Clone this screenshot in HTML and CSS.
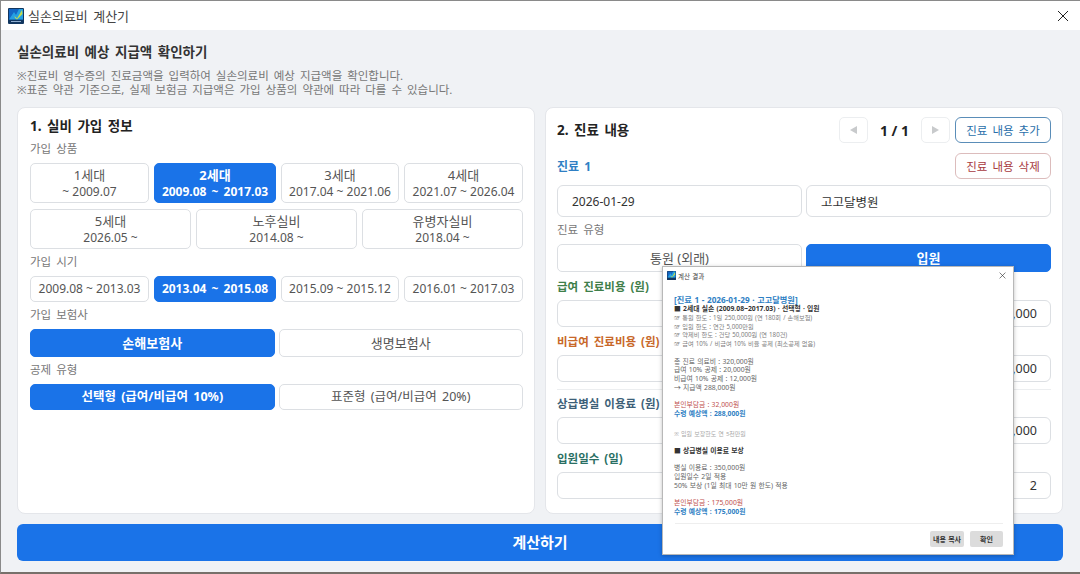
FILE: index.html
```html
<!DOCTYPE html>
<html lang="ko">
<head>
    <meta charset="UTF-8">
    <title>실손의료비 계산기</title>
    <link rel="stylesheet" href="styles.css">
</head>
<body>
    <div class="window">
        <div class="titlebar">
            <svg class="app-icon" viewBox="0 0 16 16">
                <rect width="16" height="16" rx="1" fill="#12365f"/>
                <rect x="1" y="1" width="14" height="10.5" fill="#1467c4"/>
                <path d="M1 11.5 L6 4 L8 7 L11 1 L15 1 L15 11.5 Z" fill="#25a0e2"/>
                <path d="M6.5 8 L9 10.5 L14 2 L14.5 6 L9 11.5 L7 10 Z" fill="#c3dc4e"/>
                <rect x="3" y="13" width="10" height="1" fill="#8fadcf"/>
            </svg>
            <span class="title-text">실손의료비 계산기</span>
            <svg class="close-icon" viewBox="0 0 12 12"><path d="M1 1 L11 11 M11 1 L1 11"/></svg>
        </div>

        <div class="content">
            <h1>실손의료비 예상 지급액 확인하기</h1>
            <p class="note">※진료비 영수증의 진료금액을 입력하여 실손의료비 예상 지급액을 확인합니다.</p>
            <p class="note">※표준 약관 기준으로, 실제 보험금 지급액은 가입 상품의 약관에 따라 다를 수 있습니다.</p>

            <div class="cards">
                <div class="card">
                    <h2 class="card-title">1. 실비 가입 정보</h2>

                    <div class="label">가입 상품</div>
                    <div class="opts four tall">
                        <button><span class="ko">1세대</span><br>~ 2009.07</button>
                        <button class="on"><span class="ko">2세대</span><br>2009.08 ~ 2017.03</button>
                        <button><span class="ko">3세대</span><br>2017.04 ~ 2021.06</button>
                        <button><span class="ko">4세대</span><br>2021.07 ~ 2026.04</button>
                    </div>
                    <div class="opts three tall row-gap">
                        <button><span class="ko">5세대</span><br>2026.05 ~</button>
                        <button><span class="ko">노후실비</span><br>2014.08 ~</button>
                        <button><span class="ko">유병자실비</span><br>2018.04 ~</button>
                    </div>

                    <div class="label">가입 시기</div>
                    <div class="opts four short">
                        <button>2009.08 ~ 2013.03</button>
                        <button class="on">2013.04 ~ 2015.08</button>
                        <button>2015.09 ~ 2015.12</button>
                        <button>2016.01 ~ 2017.03</button>
                    </div>

                    <div class="label">가입 보험사</div>
                    <div class="opts two mid">
                        <button class="on"><span class="ko">손해보험사</span></button>
                        <button><span class="ko">생명보험사</span></button>
                    </div>

                    <div class="label">공제 유형</div>
                    <div class="opts two short">
                        <button class="on"><span class="deduct">선택형 (급여/비급여 10%)</span></button>
                        <button><span class="deduct">표준형 (급여/비급여 20%)</span></button>
                    </div>
                </div>

                <div class="card card-right">
                    <div class="card-head">
                        <h2 class="card-title">2. 진료 내용</h2>
                        <div class="pager">
                            <button class="page-btn"><span class="arrow-left"></span></button>
                            <span class="page-num">1 / 1</span>
                            <button class="page-btn"><span class="arrow-right"></span></button>
                        </div>
                        <button class="add-btn">진료 내용 추가</button>
                    </div>

                    <div class="visit-head">
                        <span class="visit-name">진료 1</span>
                        <button class="del-btn">진료 내용 삭제</button>
                    </div>

                    <div class="two-inputs">
                        <input class="text-input date" value="2026-01-29">
                        <input class="text-input" value="고고달병원">
                    </div>

                    <div class="label">진료 유형</div>
                    <div class="opts two mid">
                        <button><span class="ko">통원 (외래)</span></button>
                        <button class="on"><span class="ko">입원</span></button>
                    </div>

                    <div class="amount-label green">급여 진료비용 (원)</div>
                    <input class="amount" value="200,000">
                    <div class="amount-label orange">비급여 진료비용 (원)</div>
                    <input class="amount" value="120,000">
                    <div class="divider"></div>
                    <div class="amount-label slate after-line">상급병실 이용료 (원)</div>
                    <input class="amount" value="350,000">
                    <div class="amount-label teal">입원일수 (일)</div>
                    <input class="amount" value="2">
                </div>
            </div>

            <button class="calc-btn">계산하기</button>
        </div>

        <!-- result dialog sits over the main window -->
        <div class="dialog">
            <div class="dialog-bar">
                <svg class="dialog-icon" viewBox="0 0 16 16">
                    <rect width="16" height="16" rx="1" fill="#12365f"/>
                    <rect x="1" y="1" width="14" height="10.5" fill="#1467c4"/>
                    <path d="M1 11.5 L6 4 L8 7 L11 1 L15 1 L15 11.5 Z" fill="#25a0e2"/>
                    <path d="M6.5 8 L9 10.5 L14 2 L14.5 6 L9 11.5 L7 10 Z" fill="#c3dc4e"/>
                </svg>
                <span class="dialog-title">계산 결과</span>
                <svg class="dialog-close" viewBox="0 0 12 12"><path d="M1 1 L11 11 M11 1 L1 11"/></svg>
            </div>
            <div class="dialog-body">
                <div class="line head blue">[진료 1 - 2026-01-29 · 고고달병원]</div>
                <div class="line strong dark">■ 2세대 실손 (2009.08~2017.03) · 선택형 · 입원</div>
                <div class="line small">☞ 통원 한도 : 1일 250,000원 (연 180회 / 손해보험)</div>
                <div class="line small">☞ 입원 한도 : 연간 5,000만원</div>
                <div class="line small">☞ 약제비 한도 : 건당 50,000원 (연 180건)</div>
                <div class="line small">☞ 급여 10% / 비급여 10% 비율 공제 (최소공제 없음)</div>
                <div class="blank"></div>
                <div class="line">총 진료 의료비 : 320,000원</div>
                <div class="line">급여 10% 공제 : 20,000원</div>
                <div class="line">비급여 10% 공제 : 12,000원</div>
                <div class="line">→ 지급액 288,000원</div>
                <div class="blank"></div>
                <div class="line red">본인부담금 : 32,000원</div>
                <div class="line strong blue">수령 예상액 : 288,000원</div>
                <div class="blank wide"></div>
                <div class="line tiny">※ 입원 보장한도 연 5천만원</div>
                <div class="blank"></div>
                <div class="line strong dark">■ 상급병실 이용료 보상</div>
                <div class="blank"></div>
                <div class="line">병실 이용료 : 350,000원</div>
                <div class="line">입원일수 2일 적용</div>
                <div class="line">50% 보상 (1일 최대 10만 원 한도) 적용</div>
                <div class="blank"></div>
                <div class="line red">본인부담금 : 175,000원</div>
                <div class="line strong blue">수령 예상액 : 175,000원</div>
            </div>
            <div class="dialog-foot">
                <button>내용 복사</button>
                <button>확인</button>
            </div>
        </div>
    </div>
</body>
</html>
```

FILE: styles.css
```css
* {
    margin: 0;
    padding: 0;
    box-sizing: border-box;
}

body {
    font-family: "Noto Sans", "Noto Sans CJK KR", sans-serif;
    background-color: #f0f2f5;
    color: #333;
    word-spacing: 2px;
    overflow: hidden;
}

button, input {
    font-family: inherit;
    word-spacing: inherit;
}

.window {
    position: relative;
    width: 1080px;
    height: 574px;
    display: flex;
    flex-direction: column;
    border-top: 1px solid #8a8a8a;
    border-left: 1px solid #8a8a8a;
    border-bottom: 2px solid #77706a;
    background-color: #f0f2f5;
}

.titlebar {
    height: 29px;
    flex: none;
    display: flex;
    align-items: center;
    padding-left: 7px;
    background-color: #fff;
}

.app-icon {
    width: 16px;
    height: 16px;
    margin-right: 4px;
}

.title-text {
    font-size: 13px;
    color: #444;
}

.close-icon {
    width: 12px;
    height: 12px;
    margin-left: auto;
    margin-right: 11px;
}

.close-icon path, .dialog-close path {
    stroke: #222;
    stroke-width: 1;
    fill: none;
}

.content {
    flex: 1;
    display: flex;
    flex-direction: column;
    padding: 12px 17px 11px 16px;
    min-height: 0;
}

h1 {
    font-size: 13.5px;
    font-weight: 700;
    line-height: 20px;
    color: #333;
    margin-bottom: 7px;
}

.note {
    font-size: 11.5px;
    line-height: 14px;
    color: #777;
}

.cards {
    flex: 1;
    display: grid;
    grid-template-columns: 518px 518px;
    gap: 10px;
    margin-top: 10px;
    min-height: 0;
}

.card {
    background: #fff;
    border: 1px solid #e4e6ea;
    border-radius: 8px;
    padding: 9px 11px 0 12px;
}

.card-right {
    padding-left: 11px;
}

.card-title {
    font-size: 13.5px;
    font-weight: 700;
    line-height: 19px;
    color: #222;
}

.label {
    font-size: 11.5px;
    line-height: 14px;
    color: #777;
    margin: 6px 0 7px;
}

.opts {
    display: grid;
    gap: 5px;
}

.opts.four {
    grid-template-columns: 119fr 122fr 118fr 119fr;
}

.opts.three {
    grid-template-columns: 1fr 1fr 1fr;
}

.opts.two {
    grid-template-columns: 1fr 1fr;
}

.opts button {
    background: #fff;
    border: 1px solid #dcdfe3;
    border-radius: 5px;
    color: #555;
    font-size: 12px;
    line-height: 16px;
    word-spacing: 0;
    white-space: nowrap;
}

.opts button.on {
    background-color: #1a73e8;
    border-color: #1a73e8;
    color: #fff;
    font-weight: 700;
    word-spacing: 2px;
}

.ko {
    font-size: 13px;
}

.deduct {
    font-size: 12.5px;
    word-spacing: 2px;
}

.tall {
    height: 40px;
}

.mid {
    height: 28px;
}

.short {
    height: 26px;
}

.row-gap {
    margin-top: 6px;
}

.card-head {
    display: flex;
    align-items: center;
    height: 26px;
}

.pager {
    display: flex;
    align-items: center;
    margin-left: auto;
    margin-right: 5px;
}

.page-btn {
    width: 29px;
    height: 26px;
    display: flex;
    align-items: center;
    justify-content: center;
    background: #fff;
    border: 1px solid #eceef0;
    border-radius: 5px;
}

.arrow-left, .arrow-right {
    width: 0;
    height: 0;
    border-top: 4.5px solid transparent;
    border-bottom: 4.5px solid transparent;
}

.arrow-left {
    border-right: 7px solid #c8cacc;
}

.arrow-right {
    border-left: 7px solid #c8cacc;
}

.page-num {
    width: 53px;
    text-align: center;
    font-size: 14px;
    font-weight: 700;
    color: #222;
    word-spacing: 0;
}

.add-btn, .del-btn {
    width: 96px;
    height: 26px;
    background: #fff;
    border-radius: 6px;
    font-size: 11.5px;
    white-space: nowrap;
}

.add-btn {
    border: 1px solid #5a8db8;
    color: #2a6faa;
}

.del-btn {
    border: 1px solid #dcbcbc;
    color: #a83a40;
}

.visit-head {
    display: flex;
    align-items: center;
    justify-content: space-between;
    margin-top: 10px;
}

.visit-name {
    font-size: 12px;
    font-weight: 700;
    color: #2f7fc4;
}

.two-inputs {
    display: grid;
    grid-template-columns: 245px 245px;
    gap: 4px;
    margin-top: 6px;
}

.text-input {
    width: 100%;
    height: 32px;
    padding: 0 14px;
    background: #fff;
    border: 1px solid #dcdfe3;
    border-radius: 6px;
    color: #333;
    font-size: 12.5px;
}

.text-input.date {
    font-size: 12px;
}

.card .two {
    column-gap: 4px;
}

.amount-label {
    font-size: 11.5px;
    font-weight: 700;
    line-height: 14px;
    margin: 8px 0 6px;
}

.amount-label.after-line {
    margin-top: 7px;
}

.green {
    color: #3f7f4a;
}

.orange {
    color: #c8682a;
}

.slate {
    color: #3d5f78;
}

.teal {
    color: #2a6f64;
}

.amount {
    display: block;
    width: 494px;
    height: 27px;
    padding: 0 13px;
    text-align: right;
    background: #fff;
    border: 1px solid #dcdfe3;
    border-radius: 6px;
    color: #333;
    font-size: 12.5px;
}

.divider {
    height: 1px;
    margin-top: 7px;
    background-color: #eceef0;
}

.calc-btn {
    flex: none;
    height: 37px;
    margin-top: 10px;
    padding-bottom: 2px;
    background-color: #1a73e8;
    border: none;
    border-radius: 6px;
    color: #fff;
    font-size: 15px;
    font-weight: 700;
}

.dialog {
    position: absolute;
    left: 661px;
    top: 265px;
    width: 352px;
    height: 289px;
    display: flex;
    flex-direction: column;
    background: #fff;
    border: 1px solid #b8b8b8;
    box-shadow: 0 1px 4px rgba(0, 0, 0, 0.25);
    word-spacing: 0.5px;
}

.dialog-bar {
    height: 15px;
    flex: none;
    display: flex;
    align-items: center;
    padding: 0 5px 0 4px;
    margin-top: 1px;
}

.dialog-icon {
    width: 9px;
    height: 9px;
    margin-right: 2px;
}

.dialog-title {
    font-size: 6.5px;
    color: #444;
}

.dialog-close {
    width: 7px;
    height: 7px;
    margin-left: auto;
    margin-right: 2px;
}

.dialog-body {
    flex: 1;
    padding: 11px 12px 0 11px;
}

.line {
    font-size: 6.8px;
    line-height: 8.8px;
    color: #666;
    white-space: nowrap;
}

.line.head {
    font-size: 8.2px;
    font-weight: 700;
    line-height: 11px;
}

.line.strong {
    font-weight: 700;
}

.line.small {
    font-size: 6.2px;
    color: #808080;
}

.line.tiny {
    font-size: 6px;
    color: #aaa;
}

.line.blue {
    color: #2f7fc4;
}

.line.dark {
    color: #333;
}

.line.red {
    color: #c0504d;
}

.blank {
    height: 8.6px;
}

.blank.wide {
    height: 10.6px;
}

.dialog-foot {
    flex: none;
    display: flex;
    justify-content: flex-end;
    gap: 6px;
    height: 31px;
    margin: 0 10px 0 12px;
    padding-top: 7px;
    border-top: 1px solid #eee;
}

.dialog-foot button {
    height: 16px;
    background: #dcdcdc;
    border: none;
    border-radius: 2px;
    color: #333;
    font-size: 7px;
    font-weight: 700;
}

.dialog-foot button:first-child {
    width: 34px;
}

.dialog-foot button:last-child {
    width: 33px;
}
```
